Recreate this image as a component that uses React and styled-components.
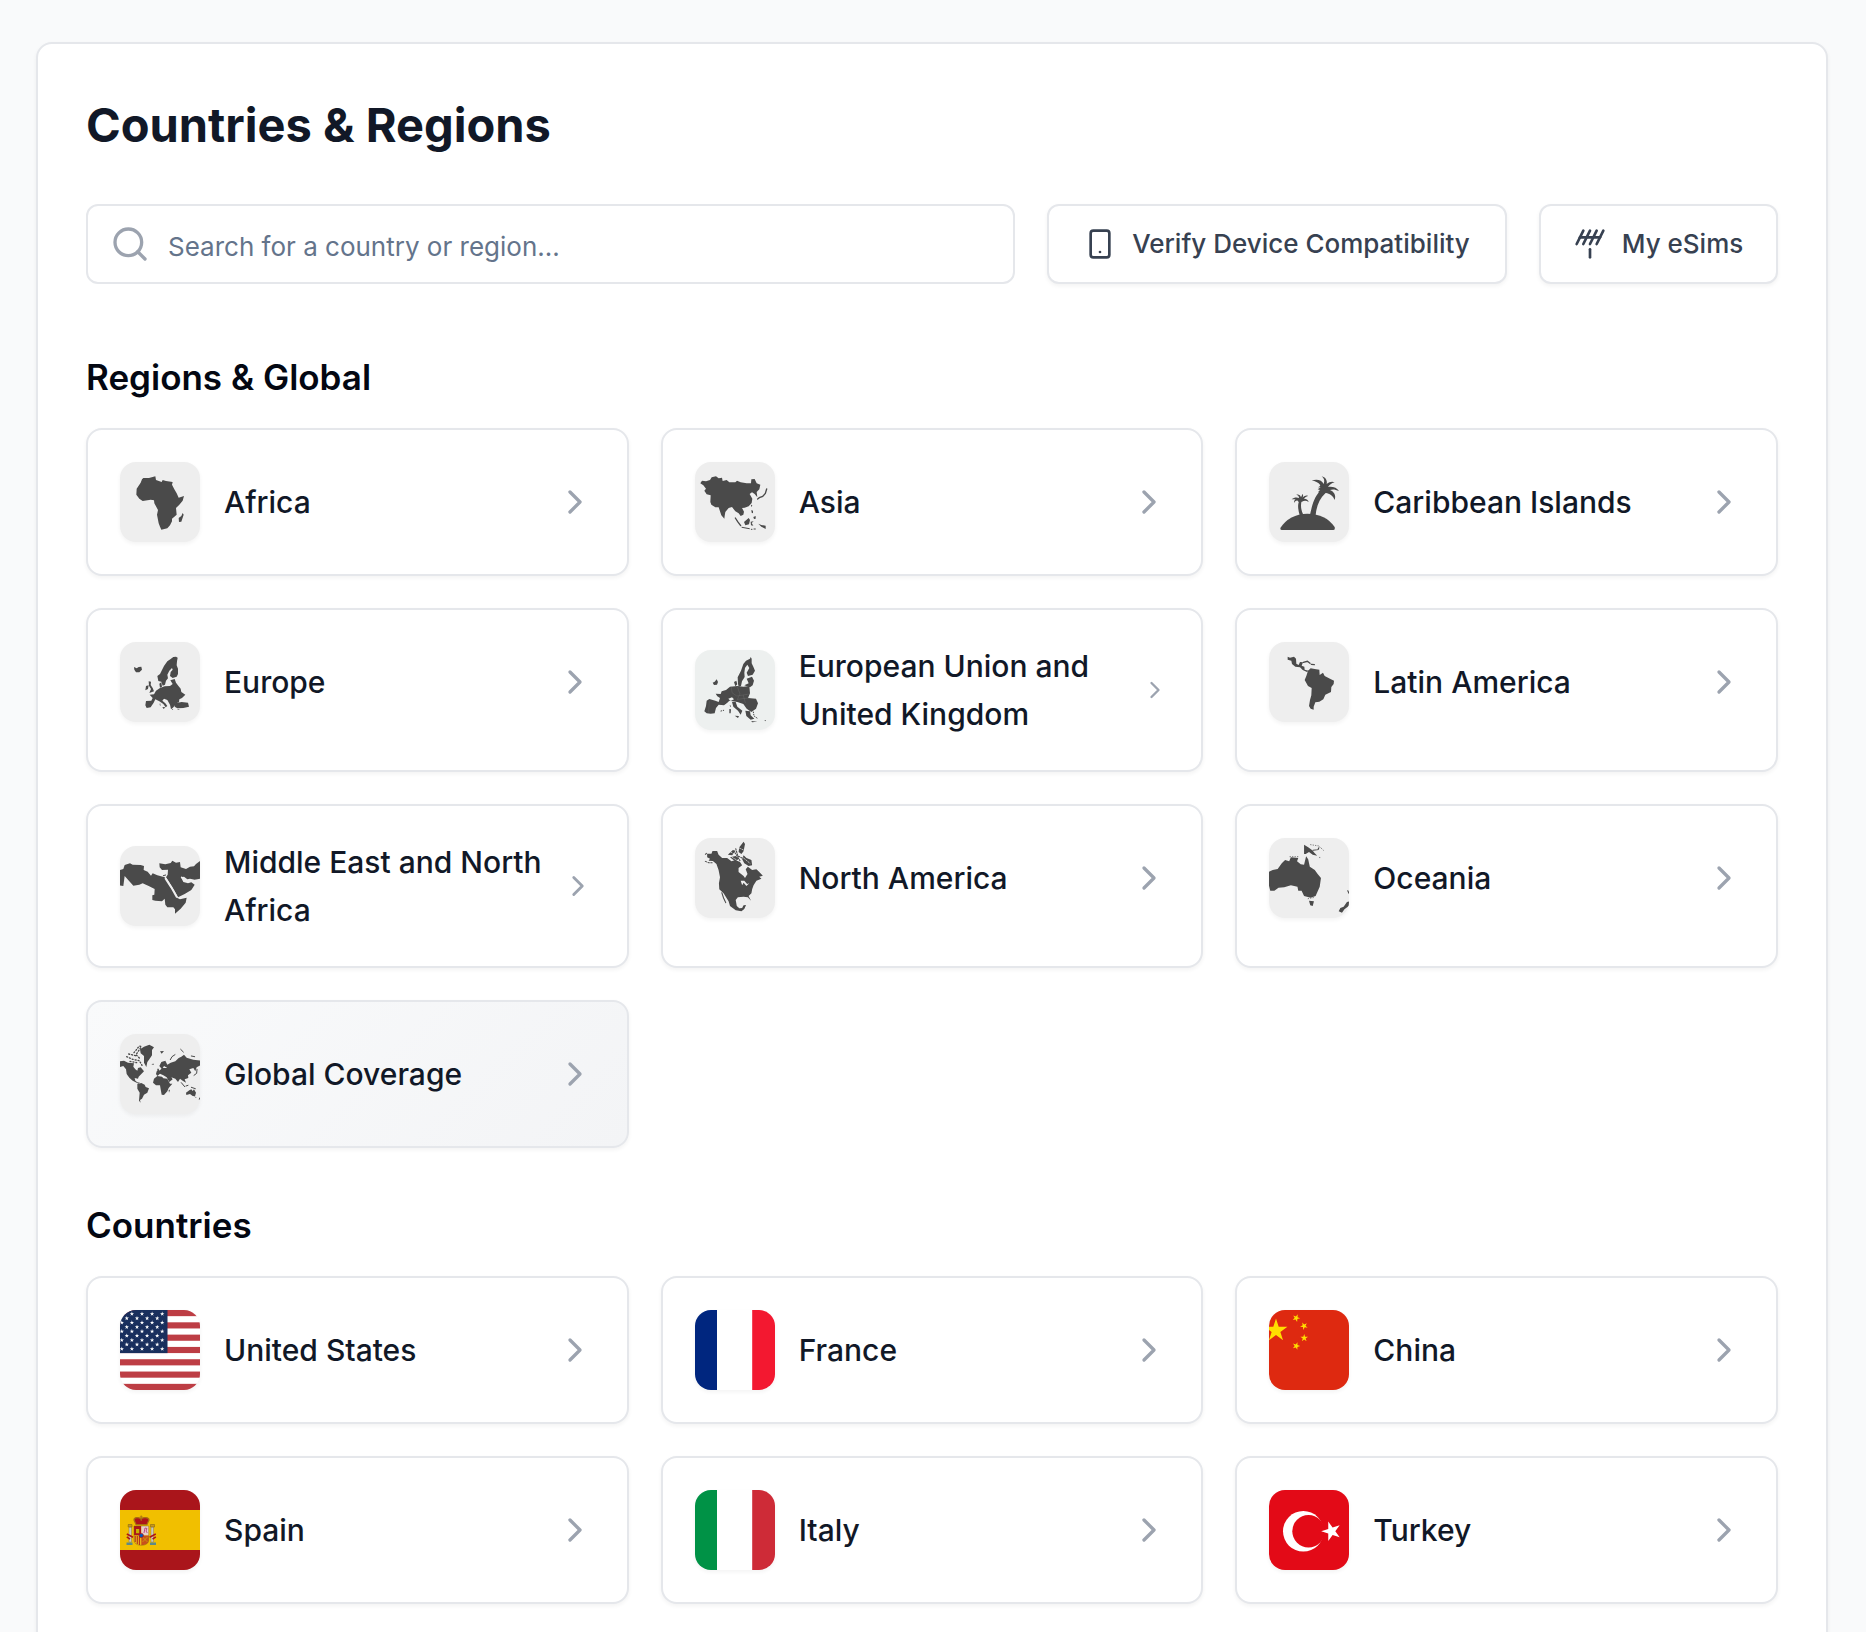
import React from "react";
import styled, { createGlobalStyle } from "styled-components";
import { Antenna, ChevronRight, Search, Smartphone } from "lucide-react";

const GlobalStyle = createGlobalStyle`
  *, *::before, *::after { box-sizing: border-box; }
  body {
    margin: 0;
    background: #f9fafb;
    color: #111827;
    font-family: Inter, "Liberation Sans", sans-serif;
  }
`;

const Page = styled.main`
  height: 100vh;
  overflow-y: auto;
  scrollbar-width: none;
  padding: 42px 38px 42px 36px;
  background: #f9fafb;
`;

const Panel = styled.div`
  max-width: 1792px;
  margin: 0 auto;
  padding: 48px;
  background: #fff;
  border: 2px solid #e5e7eb;
  border-radius: 16px;
  box-shadow: 0 2px 4px rgba(0, 0, 0, 0.05);
`;

const Title = styled.h1`
  margin: 0;
  padding: 1px 0 47px;
  font-size: 47px;
  line-height: 64px;
  font-weight: 700;
`;

const Toolbar = styled.div`
  display: flex;
  gap: 32px;
  margin-bottom: 64px;
`;

const SearchBox = styled.label`
  flex: 1;
  min-width: 0;
  display: flex;
  align-items: center;
  gap: 18px;
  height: 80px;
  padding: 0 22px;
  border: 2px solid #e5e7eb;
  border-radius: 12px;
  color: #9ca3af;
`;

const SearchInput = styled.input`
  flex: 1;
  min-width: 0;
  padding: 6px 0 0;
  border: 0;
  outline: 0;
  background: transparent;
  color: #111827;
  font: 400 26px/40px Inter, "Liberation Sans", sans-serif;

  &::placeholder {
    color: #64748b;
    opacity: 1;
  }
`;

const ToolButton = styled.button`
  display: flex;
  align-items: center;
  justify-content: center;
  gap: 16px;
  height: 80px;
  min-width: ${(p) => (p.$wide ? "460px" : "239px")};
  padding: 0 32px;
  border: 2px solid #e5e7eb;
  border-radius: 12px;
  background: #fff;
  box-shadow: 0 2px 4px rgba(0, 0, 0, 0.05);
  color: #374151;
  font: 500 26px/40px Inter, "Liberation Sans", sans-serif;
  white-space: nowrap;
  cursor: pointer;
`;

const Section = styled.section`
  & + & {
    margin-top: 48px;
  }
`;

const SectionTitle = styled.h2`
  margin: 0;
  padding: 1px 0 23px;
  color: #030712;
  font-size: 35px;
  line-height: 56px;
  font-weight: 600;
`;

const Grid = styled.div`
  display: grid;
  grid-template-columns: repeat(3, minmax(0, 1fr));
  gap: 32px;
`;

const Card = styled.a`
  display: block;
  padding: 32px;
  border: 2px solid #e5e7eb;
  border-radius: 16px;
  background: ${(p) => (p.$tinted ? "linear-gradient(135deg, #f9fafb, #f3f4f6)" : "#fff")};
  box-shadow: 0 2px 4px rgba(0, 0, 0, 0.05);
  color: #111827;
  text-decoration: none;
`;

const CardRow = styled.span`
  display: flex;
  align-items: center;
  gap: 24px;
`;

const Name = styled.span`
  flex: 1;
  min-width: 0;
  font-size: 30px;
  line-height: 48px;
  font-weight: 500;
`;

const Arrow = styled(ChevronRight)`
  flex: none;
  margin-left: -24px;
  color: #9ca3af;
`;

const Thumb = styled.svg`
  flex: none;
  width: 80px;
  height: 80px;
  border-radius: 16px;
  background: ${(p) => p.$bg || "#eeeeee"};
  box-shadow: 0 2px 4px rgba(0, 0, 0, 0.05);
  fill: #4a4a4a;
`;

const Line = styled.path`
  fill: none;
  stroke: ${(p) => p.$color || "#4a4a4a"};
  stroke-width: ${(p) => p.$w || 4};
  stroke-linecap: round;
  stroke-dasharray: ${(p) => p.$dash || "none"};
`;

function AfricaMap() {
  return (
    <Thumb viewBox="120 126 240 240" aria-hidden="true">
      <path d="M190 174L207 174L226 169L228 180L245 186L248 180L258 183L278 186L276 194L283 208L290 220L296 233L312 228L308 242L298 254L288 264L290 284L276 296L276 304L270 316L262 325L244 329L240 320L236 310L231 284L234 270L223 250L222 241L212 239L188 243L178 236L169 224L170 206L182 188L186 178ZM308 279L311 284L304 305L297 306L296 294L304 288Z" />
    </Thumb>
  );
}

function EuropeMap() {
  return (
    <Thumb viewBox="120 666 240 240" aria-hidden="true">
      <path d="M162 741L170 745L176 741L184 740L186 749L178 757L168 757L163 749Z" />
      <path d="M232 768L240 762L246 750L252 738L262 724L272 717L280 711L288 710L293 713L291 724L290 736L294 746L294 762L290 770L278 774L270 768L272 756L278 749L276 744L268 752L262 764L264 775L258 782L255 794L248 797L244 785L235 783Z" />
      <path d="M238 791L244 787L246 800L240 803ZM198 798L206 796L204 807L196 811ZM206 784L213 785L212 795L218 804L222 814L208 819L213 807L207 797Z" />
      <path d="M209 824L222 823L228 812L240 804L254 799L270 798L278 792L271 781L284 777L288 788L296 799L302 806L304 816L316 824L306 834L298 838L297 847L288 850L284 857L278 864L273 868L270 854L262 840L252 836L247 842L256 850L262 858L257 862L250 852L238 844L226 838L221 848L212 862L200 864L196 856L198 843L214 842L218 834Z" />
      <path d="M284 850L305 846L324 848L327 860L310 864L292 865L284 860ZM240 848L242 858L239 855ZM247 861L256 862L251 867ZM276 867L280 869L276 870ZM292 868L300 868L294 870Z" />
    </Thumb>
  );
}

function AsiaMap() {
  return (
    <Thumb viewBox="135 126 240 240" aria-hidden="true">
      <path d="M151 190L156 182L168 184L180 180L185 172L198 169L206 175L216 173L218 183L230 180L238 187L256 187L261 182L272 187L290 190L303 190L304 178L314 177L320 190L331 194L328 208L320 216L322 232L314 222L306 217L299 222L307 236L305 249L296 259L284 263L276 264L282 275L280 284L272 288L266 280L256 274L246 261L236 264L226 276L224 288L223 296L214 286L206 262L196 262L184 254L181 246L182 226L170 223L163 212L168 206L160 196Z" />
      <path d="M282 306L296 294L300 300L297 313L286 316ZM325 311L334 315L347 317L347 327L334 320ZM302 305L311 304L305 309L310 317L303 316ZM304 270L309 272L309 280L305 278ZM310 291L317 288L317 296L312 297ZM303 254L307 256L304 262Z" />
      <Line d="M350 207L346 220L338 229L328 233L323 237" />
      <Line $w="4" d="M256 294L263 305L272 317" />
      <Line $w="3" d="M276 322L298 326M304 328H306M312 327H316" />
    </Thumb>
  );
}

function UnionMap() {
  return (
    <Thumb viewBox="135 690 240 240" $bg="#edf0ef" aria-hidden="true">
      <path d="M188 788L194 785L200 778L204 786L201 794L192 795Z" />
      <path d="M264 792L263 772L273 752L280 732L288 722L300 716L302 711L305 716L305 730L310 740L315 752L308 764L294 768L290 758L298 744L292 734L285 744L283 758L284 771L276 784L273 798L266 800Z" />
      <path d="M290 776L306 770L312 782L308 796L300 802L283 796L296 790ZM252 786L259 782L262 793L256 799Z" />
      <path d="M197 821L212 822L215 814L228 810L240 800L262 798L280 800L298 798L300 820L294 834L318 836L324 850L318 866L304 876L290 866L280 852L262 846L238 842L232 848L222 856L206 854L198 864L194 880L182 881L170 880L163 874L168 858L170 842L178 837L196 842L206 846L210 834L202 829Z" />
      <path d="M246 846L257 846L262 860L277 872L272 884L264 872L250 860ZM286 872L300 874L302 886L313 896L302 899L289 888ZM254 887L267 888L264 894ZM238 867L243 868L242 880L238 880ZM239 856L243 857L241 862ZM304 903L322 905L306 907ZM343 901L348 900L346 904Z" />
      <path d="M235 836L246 832L252 838L242 843Z" fill="#edf0ef" />
      <Line $w="3" $dash="2 5" d="M310 876L312 888L324 896M213 873L221 871" />
      <Line $w="1" $color="#777" d="M244 801L246 818L260 828L298 822M262 800L270 822L262 838M280 826L286 848M178 843L176 876M262 838L296 834" />
    </Thumb>
  );
}

function IslandArt() {
  return (
    <Thumb viewBox="147 126 240 240" aria-hidden="true">
      <path d="M181 324Q208 282 262 281Q318 282 344 321Q346 330 340 330H185Q180 330 181 324Z" />
      <path d="M270 284C276 260 280 234 300 214L316 220C298 236 289 260 287 286Z" />
      <path d="M275 181C292 176 306 180 311 192C315 182 312 174 305 169C316 171 323 182 320 192C328 186 336 183 344 187C334 189 328 196 324 201C339 199 351 204 357 213C346 208 338 207 330 210C342 215 349 226 344 240C339 226 328 221 318 219C308 223 296 222 295 215L300 210L293 208L302 202L293 202C300 199 302 197 300 194C294 187 286 184 275 181Z" />
      <path d="M239 286C234 268 232 254 238 242L245 242C241 256 243 272 251 286Z" />
      <path d="M215 238C222 232 230 231 237 234C237 228 234 225 229 224C236 222 242 226 243 232L248 221C250 226 250 230 247 233C254 227 260 225 264 228C258 229 256 233 252 236C260 236 265 240 266 246C258 241 252 242 246 245L236 246L233 242C228 241 225 244 222 249C222 243 224 240 227 238Z" />
    </Thumb>
  );
}

function LatinMap() {
  return (
    <Thumb viewBox="147 666 240 240" aria-hidden="true">
      <path d="M203 710L210 713L222 710L228 716L229 731L236 735L240 726L249 727L245 737L253 740L254 749L266 752L261 756L248 750L240 742L226 740L216 732L214 722L203 719Z" />
      <path d="M264 752L272 745L284 747L298 749L299 765L309 758L314 768L330 776L342 782L341 792L334 801L333 816L316 824L310 838L298 845L286 847L281 860L281 869L272 866L267 858L270 840L274 826L275 804L264 798L254 780L259 768Z" />
      <Line $w="4" d="M250 727L262 724L270 730M274 733L283 734" />
    </Thumb>
  );
}

function MiddleEastMap() {
  return (
    <Thumb viewBox="120 168 240 240" aria-hidden="true">
      <path d="M119 240L130 237L134 225L150 220L158 224L182 225L192 228L191 240L203 245L213 257L218 250L232 256L254 262L262 274L272 290L283 306L292 324L300 328L320 323L317 338L302 356L285 371L285 358L280 352L262 352L256 344L254 326L246 334L226 332L217 330L217 316L223 314L224 297L206 288L188 280L178 284L160 287L148 274L134 258L130 288L119 286Z" />
      <path d="M238 220L256 223L272 219L277 212L288 218L300 216L302 232L318 237L330 230L342 229L348 222L361 212V266L344 269L330 266L322 268L312 260L303 262L310 276L324 280L334 277L344 284L334 300L314 312L294 322L284 304L272 284L258 262L263 254L264 239L246 240L239 232Z" />
      <Line $w="6" $color="#eeeeee" d="M257 266L274 292L290 320" />
      <Line $w="5" $color="#eeeeee" d="M305 262L316 271L328 273" />
      <Line $w="3" d="M250 257L257 255" />
    </Thumb>
  );
}

function NorthAmericaMap() {
  return (
    <Thumb viewBox="126 144 224 240" preserveAspectRatio="none" aria-hidden="true">
      <path d="M160 191L172 191L175 183L188 183L192 194L202 204L216 204L228 214L240 210L252 216L258 226L248 234L248 246L262 258L266 264L273 252L268 238L274 230L286 240L298 238L306 246L316 257L306 260L312 266L298 272L290 286L286 298L284 310L276 318L283 332L274 322L262 320L246 322L240 330L243 348L250 355L258 354L262 346L269 345L264 357L256 364L240 361L224 348L220 334L206 310L194 298L193 280L196 262L192 240L186 222L176 213L164 212L168 206L160 202Z" />
      <path d="M262 155L266 162L262 184L256 192L248 186L250 172ZM262 196L270 204L284 210L286 226L276 228L264 220L258 208ZM218 194L232 180L240 182L230 196ZM224 202L240 198L250 206L238 214Z" />
      <Line $w="3" $dash="4 4" d="M240 176L246 198L258 204M238 188L252 212M155 214L164 218L174 218M158 190L154 194" />
      <Line $w="2" $color="#eeeeee" $dash="4 4" d="M250 174L262 180M226 186L238 194M262 204L280 220M230 202L246 212" />
      <Line $w="3" d="M201 308L206 324L212 338M256 274L266 276M258 286L266 288" />
      <path d="M254 272L264 272L272 282L278 280L270 288L262 278L258 286Z" fill="#eeeeee" />
    </Thumb>
  );
}

function OceaniaMap() {
  return (
    <Thumb viewBox="119 144 194 240" preserveAspectRatio="none" aria-hidden="true">
      <path d="M118 246L128 240L140 237L150 220L158 210L168 214L172 202L190 204L187 214L196 223L204 224L209 199L214 208L218 230L230 240L237 252L245 264L242 290L232 318L220 323L204 318L198 302L190 302L188 290L172 286L156 292L142 293L132 302L122 302L118 282Z" />
      <path d="M216 332L228 334L225 348L219 346ZM204 164L214 172L224 181L230 190L236 197L225 194L216 186L208 192H204ZM308 336L314 334V346L302 358L296 368L288 364L292 354L300 350Z" />
      <Line $w="3" d="M226 181L238 179L240 173M310 302L313 310" />
      <Line $w="2" $dash="1 5" d="M220 164L240 168L252 182M170 200L190 200M214 326L230 322M242 202V206" />
    </Thumb>
  );
}

function WorldMap() {
  return (
    <Thumb viewBox="120 732 240 240" aria-hidden="true">
      <path d="M119 814L132 812L144 818L162 820L160 830L166 838L172 842L174 834L182 832L192 844L184 852L176 860L174 866L164 864L166 872L172 877L180 878L176 881L158 872L148 863L140 852L138 838L130 828L119 831Z" />
      <path d="M180 778L192 770L208 764L222 772L216 780L216 796L208 808L202 816L199 831L192 818L192 798L182 790ZM172 882L184 879L194 884L197 891L207 895L202 908L192 914L186 926L180 930L182 938L177 932L179 908L172 896Z" />
      <path d="M222 866L232 858L246 860L250 865L262 866L270 881L277 881L266 894L262 904L252 915L245 914L242 898L240 886L228 886L219 878Z" />
      <path d="M228 852L230 844L240 841L246 834L262 834L252 828L246 838L238 828L244 816L256 812L262 824L272 818L286 814L296 804L304 800L312 794L320 803L340 809L361 812V826L350 832L346 844L340 834L328 838L334 848L324 856L325 864L314 868L318 878L308 872L300 866L294 876L286 866L274 862L278 868L268 876L260 862L250 856L240 851L232 858Z" />
      <path d="M318 908L328 901L334 898L338 903L342 898L348 908L345 919L338 918L330 912L319 915ZM266 900L270 899L267 908ZM232 836L236 836L238 844L232 846ZM214 822L222 821L220 825ZM240 784L252 783L245 791Z" />
      <Line $w="3" d="M271 809L276 800L285 794M302 778L310 786M334 798L344 800M304 878L314 890M318 888L324 886M334 892L346 896M351 838L350 850L342 856M346 921L347 922M359 924L358 928" />
      <Line $w="4" $dash="3 6" d="M140 800L158 808L178 812L186 826M146 792L170 798M162 788L178 768L184 770L168 794L180 806M150 814L170 818" />
    </Thumb>
  );
}

function starPoints(cx, cy, r, turn = -90) {
  return Array.from({ length: 10 }, (_, i) => {
    const a = ((turn + i * 36) * Math.PI) / 180;
    const d = i % 2 ? r * 0.382 : r;
    return `${(cx + d * Math.cos(a)).toFixed(2)},${(cy + d * Math.sin(a)).toFixed(2)}`;
  }).join(" ");
}

const usStars = Array.from({ length: 9 }, (_, row) =>
  (row % 2 ? [-3.3, 6.8, 17, 27.1, 37.2] : [1.8, 11.9, 22, 32.1, 42.2]).map((x) => [x, 4.2 + row * 4.7])
).flat();

function UnitedStatesFlag() {
  return (
    <Thumb viewBox="0 0 80 80" $bg="#fff" aria-hidden="true">
      {[0, 2, 4, 6, 8, 10, 12].map((n) => (
        <rect key={n} y={(n * 80) / 13} width="80" height={80 / 13} fill="#bd3d44" />
      ))}
      <rect width="47.5" height="43.1" fill="#192f5d" />
      {usStars.map(([x, y]) => (
        <polygon key={`${x}-${y}`} points={starPoints(x, y * 0.93, 2.3)} fill="#fff" />
      ))}
    </Thumb>
  );
}

function Tricolour({ left, right }) {
  return (
    <Thumb viewBox="0 0 80 80" $bg="#fff" aria-hidden="true">
      <rect width="22" height="80" fill={left} />
      <rect x="57.2" width="22.8" height="80" fill={right} />
    </Thumb>
  );
}

function ChinaFlag() {
  return (
    <Thumb viewBox="0 0 80 80" $bg="#de2910" aria-hidden="true">
      <g fill="#ffde00">
        <polygon points={starPoints(7, 20.5, 12)} />
        <polygon points={starPoints(27.2, 8, 4, 149)} />
        <polygon points={starPoints(35, 16, 4, 171)} />
        <polygon points={starPoints(35.2, 28, 4, 198)} />
        <polygon points={starPoints(27.2, 36, 4, 217)} />
      </g>
    </Thumb>
  );
}

function TurkeyFlag() {
  return (
    <Thumb viewBox="0 0 80 80" $bg="#e30a17" aria-hidden="true">
      <circle cx="34.3" cy="41.3" r="20.3" fill="#fff" />
      <circle cx="39.5" cy="41.3" r="16.2" fill="#e30a17" />
      <polygon points={starPoints(62.4, 41.3, 10.2, 180)} fill="#fff" />
    </Thumb>
  );
}

function SpainFlag() {
  return (
    <Thumb viewBox="0 0 80 80" $bg="#aa151b" aria-hidden="true">
      <rect y="20" width="80" height="40" fill="#f1bf00" />
      <path d="M9 37H11.5V52H9ZM31 37H33.5V52H31Z" fill="#ccc9b8" stroke="#7c6b50" strokeWidth=".4" />
      <path d="M6.5 52.5H12.5V55H6.5ZM30 52.5H36V55H30Z" fill="#5d8a87" />
      <path d="M8.2 34.5H12V37H8.2ZM30.5 34.5H34.5V37H30.5Z" fill="#c8971c" stroke="#775b18" strokeWidth=".5" />
      <path d="M6.8 44L13 47.2M6.8 46.8L10 49.2M35.8 44L29.6 47.2M35.8 46.8L32.6 49.2" stroke="#ad1519" strokeWidth="1.6" />
      <path d="M14 30C14 27 19 27 21 29C23 27 29 27 29 30L27 34.5H16Z" fill="#ad1519" stroke="#a86f13" strokeWidth="1.2" />
      <path d="M21.2 25.5V31M19.8 27H22.6M16 34.8H27" stroke="#a86f13" strokeWidth="1" />
      <path d="M14 36H21.3V45.5H14Z" fill="#ad1519" />
      <path d="M21.3 36H28.7V45.5H21.3Z" fill="#e6cfc9" />
      <path d="M14 45.5H21.3V55.3C16.5 55 14 53 14 50Z" fill="#e8b51a" />
      <path d="M21.3 45.5H28.7V50C28.7 53 26.2 55 21.3 55.3Z" fill="#c9501c" />
      <path d="M15.2 46V52M17.3 46V54M19.4 46V55" stroke="#ad1519" strokeWidth=".9" />
      <path d="M16 39H19.2V43.3H16Z" fill="#c8b100" />
      <path d="M24 43L25 38L27 38.5L26 41L27.3 43" fill="none" stroke="#bd4a86" strokeWidth="1" />
      <path d="M22.5 47L27.5 52M27.5 47L22.5 52" stroke="#c8b100" strokeWidth=".7" />
      <path d="M14 36H28.7V50C28.7 53 26.2 55.3 21.3 55.3C16.5 55.3 14 53 14 50Z" fill="none" stroke="#775b18" strokeWidth=".4" />
      <circle cx="21.3" cy="45.5" r="2.1" fill="#005bbf" stroke="#ad1519" strokeWidth=".8" />
    </Thumb>
  );
}

const regions = [
  { name: "Africa", art: <AfricaMap /> },
  { name: "Asia", art: <AsiaMap /> },
  { name: "Caribbean Islands", art: <IslandArt /> },
  { name: "Europe", art: <EuropeMap /> },
  { name: "European Union and United Kingdom", art: <UnionMap />, arrow: 28 },
  { name: "Latin America", art: <LatinMap /> },
  { name: "Middle East and North Africa", art: <MiddleEastMap />, arrow: 34 },
  { name: "North America", art: <NorthAmericaMap /> },
  { name: "Oceania", art: <OceaniaMap /> },
  { name: "Global Coverage", art: <WorldMap />, tinted: true },
];

const countries = [
  { name: "United States", art: <UnitedStatesFlag /> },
  { name: "France", art: <Tricolour left="#00267f" right="#f31830" /> },
  { name: "China", art: <ChinaFlag /> },
  { name: "Spain", art: <SpainFlag /> },
  { name: "Italy", art: <Tricolour left="#009246" right="#ce2b37" /> },
  { name: "Turkey", art: <TurkeyFlag /> },
];

function Destinations({ title, items }) {
  return (
    <Section>
      <SectionTitle>{title}</SectionTitle>
      <Grid>
        {items.map((item) => (
          <Card key={item.name} href="#" $tinted={item.tinted}>
            <CardRow>
              {item.art}
              <Name>{item.name}</Name>
              <Arrow size={item.arrow || 40} aria-hidden="true" />
            </CardRow>
          </Card>
        ))}
      </Grid>
    </Section>
  );
}

export default function App() {
  return (
    <>
      <GlobalStyle />
      <Page>
        <Panel>
          <Title>Countries &amp; Regions</Title>
          <Toolbar>
            <SearchBox>
              <Search size={40} aria-hidden="true" />
              <SearchInput
                type="text"
                aria-label="Search for a country or region"
                placeholder="Search for a country or region..."
              />
            </SearchBox>
            <ToolButton type="button" $wide>
              <Smartphone size={32} aria-hidden="true" />
              Verify Device Compatibility
            </ToolButton>
            <ToolButton type="button">
              <Antenna size={32} aria-hidden="true" />
              My eSims
            </ToolButton>
          </Toolbar>
          <Destinations title="Regions & Global" items={regions} />
          <Destinations title="Countries" items={countries} />
        </Panel>
      </Page>
    </>
  );
}
